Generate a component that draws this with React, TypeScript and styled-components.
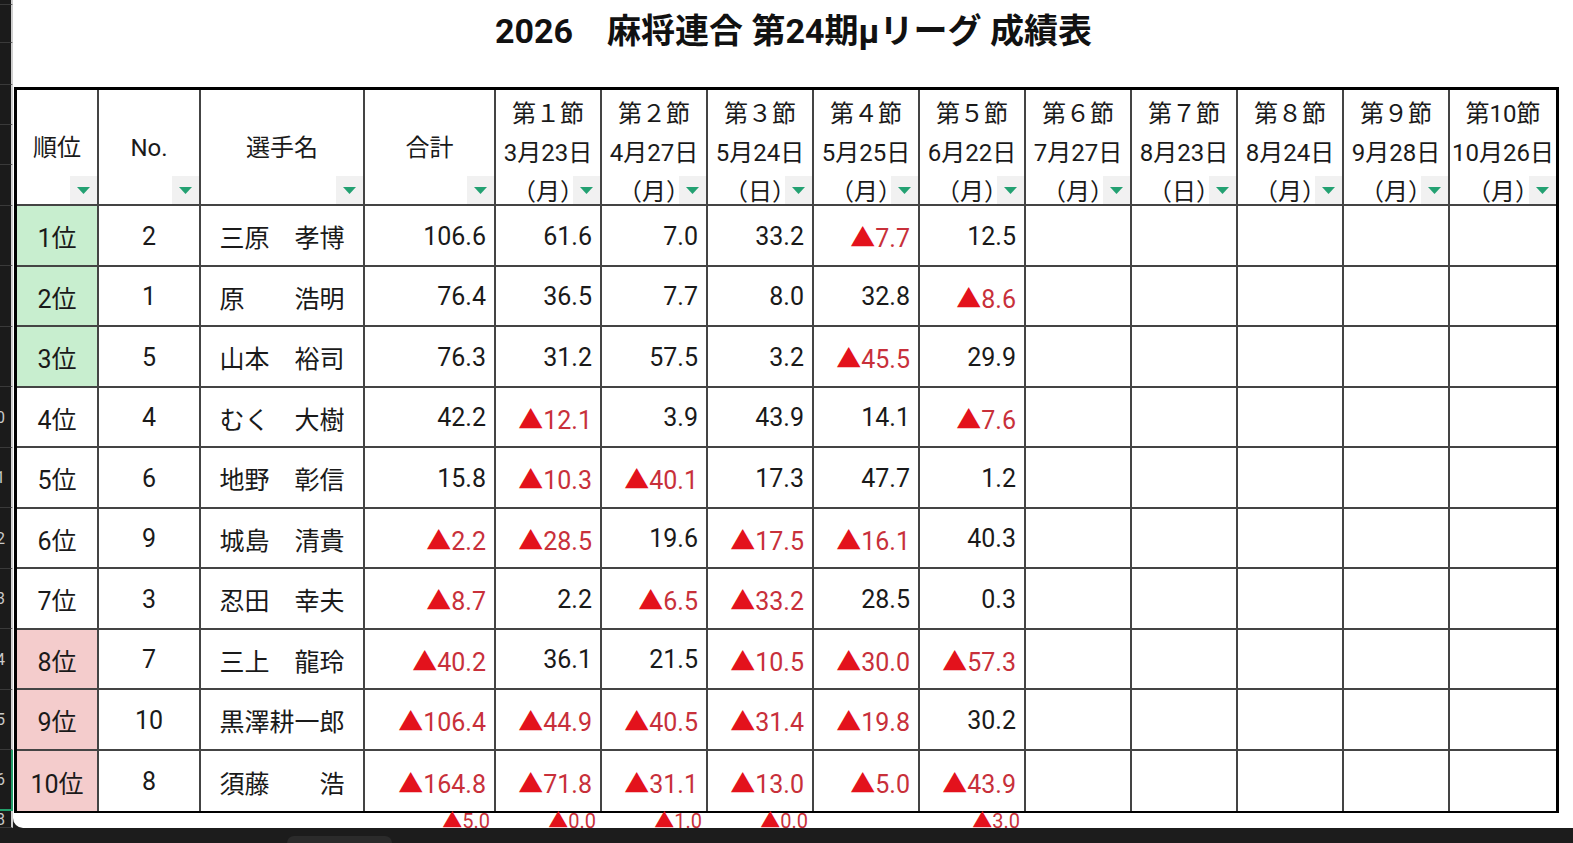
import React from "react";
import styled, { createGlobalStyle } from "styled-components";

const FONT = `Roboto, "Noto Sans CJK JP", sans-serif`;
const LINE = "2px solid #444";
const COLS = "82px 102px 164px 131px repeat(10, 1fr)";

const GlobalStyle = createGlobalStyle`
  html, body { margin: 0; padding: 0; background: #1c1c1c; }
  body { width: 1573px; height: 843px; overflow: hidden; font-family: ${FONT}; }
`;

const Screen = styled.div`
  display: flex;
  flex-direction: column;
  width: 1573px;
  height: 843px;
  background: #1c1c1c;
`;

const Main = styled.div`
  display: flex;
  height: 828px;
  flex: none;
`;

const Gutter = styled.div`
  width: 13px;
  flex: none;
  display: flex;
  flex-direction: column;
  overflow: hidden;
  background: #1b1b1b;
`;

const GutterCell = styled.div<{ $h: number; $sel?: boolean }>`
  height: ${(p) => p.$h}px;
  flex: none;
  box-sizing: border-box;
  border-bottom: ${(p) => (p.$sel ? "2px solid #22a06b" : "1px solid #3a3a3a")};
  border-right: 2px solid ${(p) => (p.$sel ? "#22a06b" : "#cfcfcf")};
  display: flex;
  align-items: center;
  justify-content: flex-end;
  overflow: hidden;
  color: #c9c9c9;
  font: 16px Roboto, sans-serif;
`;

const GutterLabel = styled.span`
  margin-right: 6px;
  white-space: nowrap;
  flex: none;
`;

const Sheet = styled.div`
  flex: 1;
  height: 828px;
  box-sizing: border-box;
  background: #fff;
  border-bottom-left-radius: 10px;
  overflow: hidden;
  padding: 11px 0 0 1px;
`;

const Title = styled.h1`
  margin: 0;
  text-align: center;
  font: 700 34px/40px ${FONT};
  color: #111;
  white-space: pre;
`;

const Table = styled.div`
  margin-top: 36px;
  width: 1545px;
  box-sizing: border-box;
  border: 3px solid #000;
  border-bottom-width: 2px;
  display: grid;
  grid-template-columns: ${COLS};
  grid-template-rows: 116px repeat(10, 60.5px);
`;

const HeadCell = styled.div<{ $last?: boolean; $stack?: boolean }>`
  position: relative;
  box-sizing: border-box;
  border-right: ${(p) => (p.$last ? "none" : LINE)};
  border-bottom: ${LINE};
  display: flex;
  flex-direction: column;
  align-items: center;
  justify-content: ${(p) => (p.$stack ? "flex-start" : "center")};
  padding-top: ${(p) => (p.$stack ? "5px" : "2px")};
  font-size: 24px;
  line-height: 39px;
  color: #1a1a1a;
  white-space: nowrap;
`;

const HeadLine = styled.span`
  display: block;
  height: 39px;
`;

const FilterButton = styled.span`
  position: absolute;
  right: 0;
  bottom: 0;
  width: 27px;
  height: 28px;
  background: #f1f1f1;
  display: flex;
  align-items: center;
  justify-content: center;
  z-index: 1;
`;

const Cell = styled.div<{
  $align: "center" | "right";
  $bg?: string;
  $last?: boolean;
  $bottom?: boolean;
}>`
  box-sizing: border-box;
  border-right: ${(p) => (p.$last ? "none" : LINE)};
  border-bottom: ${(p) => (p.$bottom ? "none" : LINE)};
  background: ${(p) => p.$bg ?? "#fff"};
  display: flex;
  align-items: center;
  justify-content: ${(p) => (p.$align === "right" ? "flex-end" : "center")};
  padding: 2px 8px 0;
  font-size: 25px;
  color: #1a1a1a;
  white-space: nowrap;
`;

const Neg = styled.span`
  color: #c8303a;
`;

const Tri = styled.span`
  color: #e3121c;
`;

const ExtraRow = styled.div`
  width: 1545px;
  box-sizing: border-box;
  padding: 0 3px;
  display: grid;
  grid-template-columns: ${COLS};
`;

const ExtraCell = styled.div`
  text-align: right;
  padding-right: 6px;
  font-size: 20px;
  line-height: 16px;
  white-space: nowrap;
`;

const BottomBar = styled.div`
  height: 15px;
  flex: none;
  background: #1c1c1c;
  display: flex;
  align-items: flex-end;
  padding-left: 287px;
`;

const Tab = styled.div`
  width: 105px;
  height: 7px;
  background: #2b2b2b;
  border-radius: 8px 8px 0 0;
`;

const Filter = () => (
  <FilterButton>
    <svg width="13" height="7" viewBox="0 0 13 7">
      <path d="M0 0 H13 L6.5 7 Z" fill="#23a172" />
    </svg>
  </FilterButton>
);

const Value = ({ v }: { v: string }) =>
  v.startsWith("▲") ? (
    <Neg>
      <Tri>▲</Tri>
      {v.slice(1)}
    </Neg>
  ) : (
    <>{v}</>
  );

const rounds: [string, string, string][] = [
  ["第１節", "3月23日", "（月）"],
  ["第２節", "4月27日", "（月）"],
  ["第３節", "5月24日", "（日）"],
  ["第４節", "5月25日", "（月）"],
  ["第５節", "6月22日", "（月）"],
  ["第６節", "7月27日", "（月）"],
  ["第７節", "8月23日", "（日）"],
  ["第８節", "8月24日", "（月）"],
  ["第９節", "9月28日", "（月）"],
  ["第10節", "10月26日", "（月）"],
];

type Player = { no: string; name: string; total: string; scores: string[] };

const players: Player[] = [
  { no: "2", name: "三原　孝博", total: "106.6", scores: ["61.6", "7.0", "33.2", "▲7.7", "12.5"] },
  { no: "1", name: "原　　浩明", total: "76.4", scores: ["36.5", "7.7", "8.0", "32.8", "▲8.6"] },
  { no: "5", name: "山本　裕司", total: "76.3", scores: ["31.2", "57.5", "3.2", "▲45.5", "29.9"] },
  { no: "4", name: "むく　大樹", total: "42.2", scores: ["▲12.1", "3.9", "43.9", "14.1", "▲7.6"] },
  { no: "6", name: "地野　彰信", total: "15.8", scores: ["▲10.3", "▲40.1", "17.3", "47.7", "1.2"] },
  { no: "9", name: "城島　清貴", total: "▲2.2", scores: ["▲28.5", "19.6", "▲17.5", "▲16.1", "40.3"] },
  { no: "3", name: "忍田　幸夫", total: "▲8.7", scores: ["2.2", "▲6.5", "▲33.2", "28.5", "0.3"] },
  { no: "7", name: "三上　龍玲", total: "▲40.2", scores: ["36.1", "21.5", "▲10.5", "▲30.0", "▲57.3"] },
  { no: "10", name: "黒澤耕一郎", total: "▲106.4", scores: ["▲44.9", "▲40.5", "▲31.4", "▲19.8", "30.2"] },
  { no: "8", name: "須藤　　浩", total: "▲164.8", scores: ["▲71.8", "▲31.1", "▲13.0", "▲5.0", "▲43.9"] },
];

const extra = ["", "", "", "▲5.0", "▲0.0", "▲1.0", "▲0.0", "", "▲3.0", "", "", "", "", ""];

const gutterRows: { h: number; label: string; sel?: boolean }[] = [
  { h: 5, label: "" },
  { h: 38, label: "" },
  { h: 42, label: "" },
  { h: 40, label: "" },
  { h: 40, label: "" },
  { h: 41, label: "" },
  ...Array.from({ length: 10 }, (_, i) => ({
    h: i % 2 === 0 ? 60 : 61,
    label: i + 7 >= 10 ? String(i + 7) : "",
    sel: i === 9,
  })),
  { h: 17, label: "18" },
];

const rankBg = (i: number) => (i < 3 ? "#c8eecf" : i >= 7 ? "#f4cccc" : undefined);

export default function App() {
  return (
    <>
      <GlobalStyle />
      <Screen>
        <Main>
          <Gutter>
            {gutterRows.map((r, i) => (
              <GutterCell key={i} $h={r.h} $sel={r.sel}>
                {r.label && <GutterLabel>{r.label}</GutterLabel>}
              </GutterCell>
            ))}
          </Gutter>
          <Sheet>
            <Title>2026　麻将連合 第24期μリーグ 成績表</Title>
            <Table>
              {["順位", "No.", "選手名", "合計"].map((h) => (
                <HeadCell key={h}>
                  {h}
                  <Filter />
                </HeadCell>
              ))}
              {rounds.map(([a, b, c], i) => (
                <HeadCell key={a} $stack $last={i === rounds.length - 1}>
                  <HeadLine>{a}</HeadLine>
                  <HeadLine>{b}</HeadLine>
                  <HeadLine>{c}</HeadLine>
                  <Filter />
                </HeadCell>
              ))}
              {players.map((p, r) => {
                const bottom = r === players.length - 1;
                const scores = [...p.scores, "", "", "", "", ""];
                return (
                  <React.Fragment key={p.no}>
                    <Cell $align="center" $bg={rankBg(r)} $bottom={bottom}>
                      {r + 1}位
                    </Cell>
                    <Cell $align="center" $bottom={bottom}>
                      {p.no}
                    </Cell>
                    <Cell $align="center" $bottom={bottom}>
                      {p.name}
                    </Cell>
                    <Cell $align="right" $bottom={bottom}>
                      <Value v={p.total} />
                    </Cell>
                    {scores.map((s, c) => (
                      <Cell key={c} $align="right" $bottom={bottom} $last={c === scores.length - 1}>
                        <Value v={s} />
                      </Cell>
                    ))}
                  </React.Fragment>
                );
              })}
            </Table>
            <ExtraRow>
              {extra.map((v, i) => (
                <ExtraCell key={i}>
                  <Value v={v} />
                </ExtraCell>
              ))}
            </ExtraRow>
          </Sheet>
        </Main>
        <BottomBar>
          <Tab />
        </BottomBar>
      </Screen>
    </>
  );
}
